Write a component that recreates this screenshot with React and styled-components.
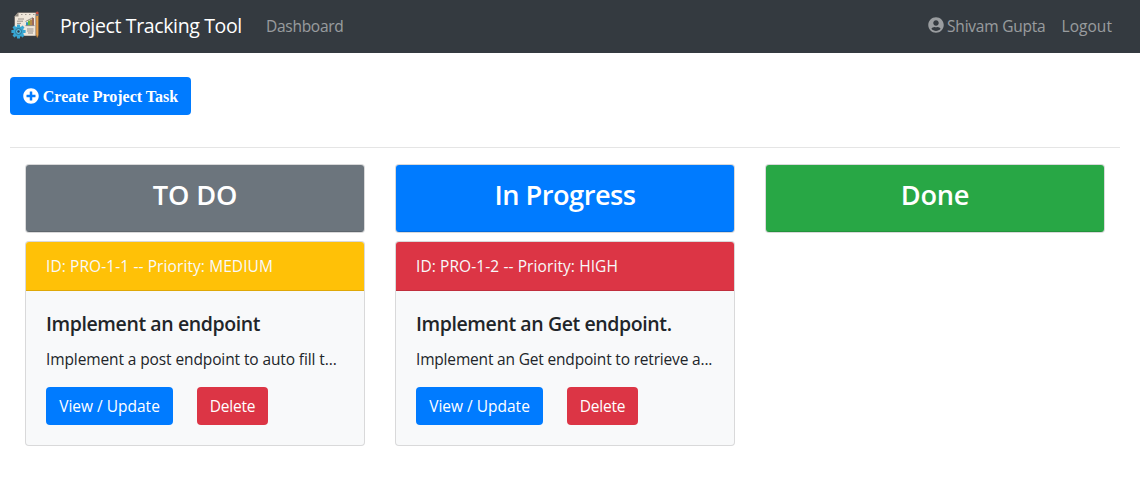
import React from 'react';
import styled, { createGlobalStyle } from 'styled-components';
import { FaPlusCircle, FaUserCircle } from 'react-icons/fa';

const GlobalStyle = createGlobalStyle`
  *, *::before, *::after { box-sizing: border-box; }
  body {
    margin: 0;
    background: #fff;
    color: #212529;
    font: 400 15.5px/24px "Open Sans", "Noto Sans", sans-serif;
  }
`;

const Navbar = styled.nav`
  display: flex;
  align-items: center;
  height: 53px;
  padding: 0 20px 2px 10px;
  background: #343a40;
`;

const Logo = styled.svg`
  display: block;
  width: 30px;
  height: 30px;
  margin: 0 20px 1px 0;
`;

const Brand = styled.a`
  width: 182px;
  margin-right: 16px;
  color: #fff;
  font-size: 19.5px;
  line-height: 30px;
  letter-spacing: -0.36px;
  white-space: nowrap;
`;

const NavLinks = styled.div`
  display: flex;
  margin-left: ${(p) => (p.$end ? 'auto' : '0')};
`;

const NavLink = styled.a`
  display: flex;
  align-items: center;
  gap: 3px;
  padding: 0 8px;
  color: rgba(255, 255, 255, 0.5);
  letter-spacing: ${(p) => p.$tracking}px;
  white-space: nowrap;

  svg {
    margin-bottom: 2px;
  }
`;

const Main = styled.main`
  padding: 24px 20px 0 10px;
`;

const Button = styled.button`
  height: 38px;
  padding: 0;
  width: ${(p) => p.$width}px;
  display: flex;
  align-items: center;
  justify-content: center;
  border: 0;
  border-radius: 4px;
  background: ${(p) => (p.$danger ? '#dc3545' : '#007bff')};
  color: #fff;
  font: inherit;
  letter-spacing: ${(p) => p.$tracking || 0}px;
  white-space: nowrap;
`;

const CreateButton = styled(Button)`
  gap: 4px;
  padding-top: 1px;
  font: bold 16px/24px "Liberation Serif", serif;

  svg {
    margin-bottom: 1px;
  }
`;

const Divider = styled.hr`
  height: 1px;
  margin: 32px 0 16px;
  border: 0;
  background: rgba(0, 0, 0, 0.1);
`;

const Board = styled.div`
  display: grid;
  grid-template-columns: repeat(3, 1fr);
`;

const Column = styled.section`
  padding: 0 15px;
`;

const Card = styled.article`
  margin-bottom: 8px;
  border: 1px solid rgba(0, 0, 0, 0.125);
  border-radius: 4px;
  background: #f8f9fa;
  overflow: hidden;
`;

const ColumnHeader = styled.header`
  height: 67px;
  padding: 12px 20px;
  border-bottom: 1px solid rgba(0, 0, 0, 0.125);
  background: ${(p) => p.$color};
`;

const ColumnTitle = styled.h3`
  margin: 0;
  color: #fff;
  font-size: 27.2px;
  font-weight: 600;
  line-height: 36px;
  letter-spacing: ${(p) => p.$tracking}px;
  text-align: center;
`;

const TaskHeader = styled.header`
  height: 49px;
  padding: 12px 20px;
  border-bottom: 1px solid rgba(0, 0, 0, 0.125);
  background: ${(p) => p.$color};
  color: #f8f9fa;
  letter-spacing: 0.09px;
  white-space: nowrap;
`;

const TaskBody = styled.div`
  padding: 21px 20px 20px;
`;

const TaskTitle = styled.h5`
  margin: 0 0 11px;
  font-size: 19.5px;
  font-weight: 600;
  line-height: 24px;
  letter-spacing: -0.4px;
  white-space: nowrap;
`;

const TaskText = styled.p`
  margin: 0 0 16px;
  letter-spacing: ${(p) => p.$tracking}px;
  white-space: nowrap;
`;

const Actions = styled.div`
  display: flex;
  gap: 24px;
`;

const columns = [
  {
    title: 'TO DO',
    color: '#6c757d',
    tracking: -0.1,
    tasks: [
      {
        id: 'PRO-1-1',
        priority: 'MEDIUM',
        color: '#ffc107',
        title: 'Implement an endpoint',
        text: 'Implement a post endpoint to auto fill t...',
        tracking: -0.11,
      },
    ],
  },
  {
    title: 'In Progress',
    color: '#007bff',
    tracking: -0.5,
    tasks: [
      {
        id: 'PRO-1-2',
        priority: 'HIGH',
        color: '#dc3545',
        title: 'Implement an Get endpoint.',
        text: 'Implement an Get endpoint to retrieve a...',
        tracking: -0.18,
      },
    ],
  },
  { title: 'Done', color: '#28a745', tracking: -0.3, tasks: [] },
];

const teeth = [0, 45, 90, 135, 180, 225, 270, 315];

function ProjectLogo() {
  return (
    <Logo viewBox="0 0 30 30" aria-hidden="true">
      <path d="M8 2.5h18V26H9l-4.5-6V6.5z" fill="#efe6da" stroke="#4a4543" strokeWidth=".5" />
      <path d="M4.5 6.5L8.5 2.5v4z" fill="#8d857d" />
      <path d="M11 4.5h1.5M15 4.5h1.5M19 4.5h1.5M23 4.5h1.5" stroke="#8a8580" strokeWidth=".8" />
      <path d="M8 9h6M7 11.2h6M7 13.4h4M17 19h6.5M17 21h6.5M18 23h5" stroke="#8d8780" strokeWidth=".9" />
      <path d="M16 15.2v-3h2v3z" fill="#2e8fc0" />
      <path d="M18 15.2v-4.6h2v4.6z" fill="#69b936" />
      <path d="M20 15.2V9.5h2v5.7z" fill="#b58a48" />
      <path d="M22 15.2V8h2v7.2z" fill="#9a6a60" />
      <path d="M15.5 11.5L23 7.5M15.5 15.6h9" stroke="#6c6663" strokeWidth=".7" />
      <path d="M26 4.2h2.5V25l-1.25 3L26 25z" fill="#e6a04b" stroke="#705038" strokeWidth=".4" />
      <path d="M26 2.2q1.25-1.5 2.5 0v2H26z" fill="#c64b40" />
      <path d="M26 4.2h2.5v1.7H26z" fill="#68717c" />
      <g fill="#38a7d3">
        {teeth.map((a) => (
          <rect key={a} x="7" y="14.4" width="3" height="4" rx=".5" transform={`rotate(${a} 8.5 21.5)`} />
        ))}
      </g>
      <circle cx="8.5" cy="21.5" r="5.3" fill="#38a7d3" />
      <circle cx="8.5" cy="21.5" r="3" fill="#57bde0" stroke="#2b6a88" strokeWidth=".9" />
      <circle cx="8.5" cy="21.5" r="1.2" fill="#343a40" />
    </Logo>
  );
}

function Task({ task }) {
  return (
    <Card>
      <TaskHeader $color={task.color}>{`ID: ${task.id} -- Priority: ${task.priority}`}</TaskHeader>
      <TaskBody>
        <TaskTitle>{task.title}</TaskTitle>
        <TaskText $tracking={task.tracking}>{task.text}</TaskText>
        <Actions>
          <Button $width={127}>View / Update</Button>
          <Button $width={71} $danger $tracking={-0.25}>Delete</Button>
        </Actions>
      </TaskBody>
    </Card>
  );
}

export default function App() {
  return (
    <>
      <GlobalStyle />
      <Navbar>
        <ProjectLogo />
        <Brand>Project Tracking Tool</Brand>
        <NavLinks>
          <NavLink $tracking={-0.28}>Dashboard</NavLink>
        </NavLinks>
        <NavLinks $end>
          <NavLink $tracking={-0.22}>
            <FaUserCircle size={16} />
            Shivam Gupta
          </NavLink>
          <NavLink $tracking={0.05}>Logout</NavLink>
        </NavLinks>
      </Navbar>
      <Main>
        <CreateButton $width={181}>
          <FaPlusCircle size={16} />
          Create Project Task
        </CreateButton>
        <Divider />
        <Board>
          {columns.map((column) => (
            <Column key={column.title}>
              <Card>
                <ColumnHeader $color={column.color}>
                  <ColumnTitle $tracking={column.tracking}>{column.title}</ColumnTitle>
                </ColumnHeader>
              </Card>
              {column.tasks.map((task) => (
                <Task key={task.id} task={task} />
              ))}
            </Column>
          ))}
        </Board>
      </Main>
    </>
  );
}
